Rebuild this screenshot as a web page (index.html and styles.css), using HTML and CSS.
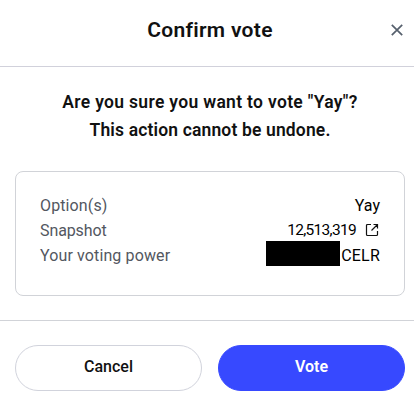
FILE: index.html
```html
<!DOCTYPE html>
<html lang="en">

<head>
    <meta charset="UTF-8">
    <meta name="viewport" content="width=device-width, initial-scale=1.0">
    <title>Confirm vote</title>
    <link rel="stylesheet" href="styles.css">
</head>

<body>
    <div class="modal">
        <div class="modal-header">
            <h2 class="modal-title">Confirm vote</h2>
            <button class="close-btn" aria-label="Close">
                <svg width="12" height="12" viewBox="0 0 12 12">
                    <path d="M0.8 0.8L11.2 11.2M11.2 0.8L0.8 11.2" fill="none" stroke="#56606d" stroke-width="1.7"/>
                </svg>
            </button>
        </div>
        <div class="modal-body">
            <div class="question">
                <p class="line-one">Are you sure you want to vote "Yay"?</p>
                <p class="line-two">This action cannot be undone.</p>
            </div>
            <div class="details">
                <div class="row">
                    <span class="label">Option(s)</span>
                    <span class="value">Yay</span>
                </div>
                <div class="row">
                    <span class="label snapshot">Snapshot</span>
                    <span class="value">
                        <span class="block-number">12,513,319</span>
                        <svg class="link-icon" width="14" height="14" viewBox="0 0 14 14">
                            <path d="M6 1.5H2.5Q1.5 1.5 1.5 2.5V11.5Q1.5 12.5 2.5 12.5H11.5Q12.5 12.5 12.5 11.5V8M8.5 1.5H12.5V5.5M12.5 1.5L6.5 7.5" fill="none" stroke="#111" stroke-width="1.2"/>
                        </svg>
                    </span>
                </div>
                <div class="row">
                    <span class="label">Your voting power</span>
                    <span class="value">
                        <span class="hidden-amount"></span>
                        <span class="token">CELR</span>
                    </span>
                </div>
            </div>
        </div>
        <div class="modal-footer">
            <button class="btn cancel">Cancel</button>
            <button class="btn vote">Vote</button>
        </div>
    </div>
</body>

</html>
```
FILE: styles.css
```css
* {
    box-sizing: border-box;
}

body {
    margin: 0;
    background: #fff;
    color: #111;
    font-family: Roboto, "Liberation Sans", sans-serif;
}

.modal {
    width: 420px;
    height: 408px;
    overflow: hidden;
}

/* Header */
.modal-header {
    position: relative;
    height: 67px;
    padding-top: 15px;
    border-bottom: 1px solid #d1d1db;
}

.modal-title {
    margin: 0;
    font-size: 21px;
    line-height: 30px;
    font-weight: 600;
    letter-spacing: 0.3px;
    text-align: center;
}

.close-btn {
    position: absolute;
    top: 24px;
    left: 391px;
    width: 12px;
    height: 12px;
    padding: 0;
    border: 0;
    background: none;
    cursor: pointer;
}

.close-btn svg {
    display: block;
}

/* Body */
.modal-body {
    height: 254px;
    padding: 21px 15px 0;
    border-bottom: 1px solid #d1d3d8;
}

.question {
    height: 83px;
    text-align: center;
    font-size: 17.5px;
    line-height: 28px;
    font-weight: 600;
}

.question p {
    margin: 0;
}

.line-one {
    letter-spacing: 0.32px;
}

.line-two {
    letter-spacing: 0.15px;
}

.details {
    width: 390px;
    height: 125px;
    padding: 21px 24px;
    border: 1px solid #d1d3d8;
    border-radius: 8px;
}

.row {
    display: flex;
    justify-content: space-between;
    height: 25px;
    font-size: 16px;
    line-height: 25px;
}

.label {
    color: #53575f;
    font-weight: 400;
    letter-spacing: 0.12px;
}

.snapshot {
    letter-spacing: -0.1px;
}

.value {
    display: flex;
    align-items: center;
    color: #000;
}

.block-number {
    font-size: 15.5px;
    letter-spacing: -0.7px;
}

.link-icon {
    margin: 0 1px 2px 9px;
}

.hidden-amount {
    width: 74px;
    height: 25px;
    margin: 0 1px 4px 0;
    background: #000;
}

.token {
    letter-spacing: 0.2px;
}

/* Buttons */
.modal-footer {
    display: flex;
    gap: 16px;
    padding: 24px 15px 0;
}

.btn {
    width: 187px;
    height: 46px;
    padding: 0 0 3px;
    border: 1px solid #d1d3dc;
    border-radius: 23px;
    background: #fff;
    color: #111;
    font-family: inherit;
    font-size: 16px;
    font-weight: 500;
    cursor: pointer;
}

.btn.vote {
    border-color: #3749ff;
    background: #3749ff;
    color: #fff;
    font-weight: 600;
}
```
